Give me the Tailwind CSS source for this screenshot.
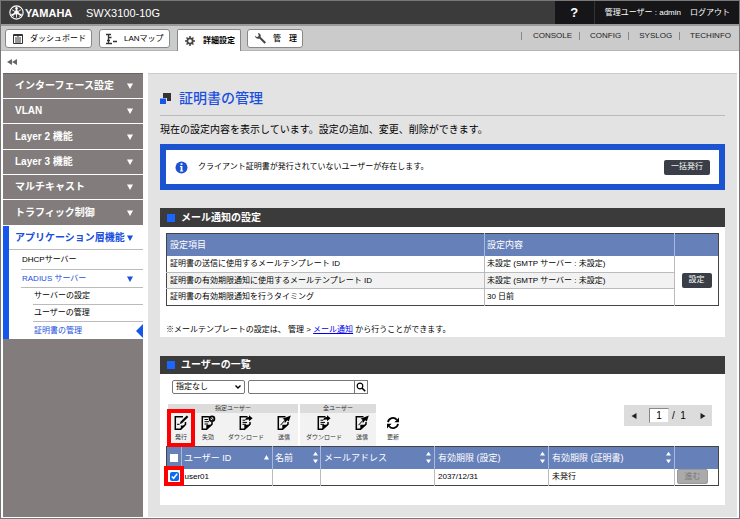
<!DOCTYPE html>
<html lang="ja">
    <head>
        <meta charset="UTF-8" />
        <meta name="viewport" content="width=device-width, initial-scale=1.0" />
        <title>SWX3100-10G</title>
        <script src="https://cdn.jsdelivr.net/npm/@tailwindcss/browser@4"></script>
    </head>
    <body class="flex min-h-screen flex-col border border-[#777] bg-white font-['Liberation_Sans','Noto_Sans_CJK_JP',sans-serif] text-[8px] leading-3 text-black">
        <!-- Icons -->
        <svg class="hidden">
            <symbol id="doc" viewBox="0 0 16 16">
                <path d="M9.5 1.8H2.3v12.4h4.2l5.5-5V7" fill="none" stroke="currentColor" stroke-width="1.5" />
                <path d="M6.3 14.9V9.8h5.9z" fill="currentColor" />
            </symbol>
            <symbol id="issue" viewBox="0 0 16 16">
                <path d="M10 1.8H2.3v12.4h5.2l5-4.7V7" fill="none" stroke="currentColor" stroke-width="1.5" />
                <path d="M7.8 14.9v-4.3h4.6z" fill="currentColor" />
                <path d="M13.8.6l1.5 1.5L9 8.3l-2.2.8.7-2.3z" fill="currentColor" />
                <path d="M4 9.3h2.6" stroke="currentColor" />
            </symbol>
            <symbol id="revoke" viewBox="0 0 16 16">
                <use href="#doc" />
                <path d="M4.5 4.5H8M4.5 6.7H9M4.5 9H8" stroke="currentColor" />
                <circle cx="12" cy="3.8" r="2.4" fill="#f2f2f2" stroke="currentColor" stroke-width="1.8" />
                <path d="M10.8 2.6l2.4 2.4" stroke="currentColor" />
            </symbol>
            <symbol id="download" viewBox="0 0 16 16">
                <use href="#doc" />
                <path d="M4.5 5.2H7M4.5 7.4H9M4.5 9.3H8" stroke="currentColor" />
                <path d="M7 5.5c.5-2.5 2-3.5 4-3.5V.3l3.6 3-3.6 3V4.4c-1.7 0-2.8.2-4 1.1z" fill="currentColor" />
            </symbol>
            <symbol id="send" viewBox="0 0 16 16">
                <use href="#doc" />
                <path d="M14.8.5l-2 6-1.7-1.2-2.3 3-.3-3.6-2-.9z" fill="currentColor" />
                <path d="M4.5 10.2l4.5-5" stroke="currentColor" />
            </symbol>
            <symbol id="refresh" viewBox="0 0 16 16">
                <path d="M3 7.2a5 5 0 0 1 8.8-2.4M13 8.8a5 5 0 0 1-8.8 2.4" fill="none" stroke="currentColor" stroke-width="1.8" />
                <path d="M14 2.4v4.8H9.4zM2 13.6V8.8h4.6z" fill="currentColor" />
            </symbol>
            <symbol id="down" viewBox="0 0 6 6"><path d="M0 .5h6L3 6z" fill="currentColor" /></symbol>
            <symbol id="sort" viewBox="0 0 6 14"><path d="M0 4.5h6L3 0zM0 9.5h6L3 14z" fill="currentColor" /></symbol>
        </svg>

        <header class="flex h-[23px] items-center bg-[#3b3b3b] text-white">
            <div class="flex w-[85px] items-center gap-px pl-2">
                <svg class="size-[15px]" viewBox="0 0 16 16" fill="none" stroke="currentColor">
                    <circle cx="8" cy="8" r="7.1" stroke-width="1.2" />
                    <path d="M8 8V1.8M8 8l5.5 3.2M8 8l-5.5 3.2" stroke-width="1.8" />
                    <path d="M8 8v5.5M8 8L3.2 5M8 8l4.8-3M6.3 3.5h3.4M11.2 12.4l1.9-3M4.8 12.4l-1.9-3" stroke-width=".9" />
                    <circle cx="8" cy="8" r="1.8" fill="currentColor" />
                </svg>
                <span class="text-[11px] font-bold">YAMAHA</span>
            </div>
            <h1 class="text-[11px]">SWX3100-10G</h1>
            <div class="ml-auto flex h-full items-center bg-[#161618]">
                <a href="#" class="flex h-full w-10 items-center justify-center border-r border-[#333] text-[13px] font-bold">?</a>
                <span class="pl-[10px]">管理ユーザー : admin</span>
                <a href="#" class="px-[9px]">ログアウト</a>
            </div>
        </header>

        <nav class="flex h-[27px] items-end border-t-2 border-b border-t-[#999] border-b-[#b5b5b5] bg-[#cbcbcb] pl-1">
            <a href="#" class="mb-[2px] flex h-[19px] w-[87px] items-center gap-[7px] rounded-[3px] border border-[#888] bg-white pl-[7px]">
                <svg class="h-[10px] w-[10px]" viewBox="0 0 10 10" fill="none" stroke="#333"><path d="M.5.5h9v9h-9zM0 1.5h10M2 4h2M6 4h2M2 6h2M6 6h2M2 8h2M6 8h2M5 1v8" /></svg>
                ダッシュボード
            </a>
            <a href="#" class="mb-[2px] ml-[7px] flex h-[19px] w-[71px] items-center gap-[7px] rounded-[3px] border border-[#888] bg-white pl-[6px]">
                <svg class="h-[12px] w-[11px]" viewBox="0 0 11 12" fill="none" stroke="#333"><path d="M0 1.5h5M2.5 1v10M2.5 4.5h3M1 7.5h3M7 8.5h4M0 10.5h6" stroke-width="1.3" /></svg>
                LANマップ
            </a>
            <a href="#" class="z-10 -mb-px ml-[7px] flex h-[22px] w-[64px] items-center gap-[8px] rounded-t-[2px] border border-b-0 border-[#888] bg-white pl-[7px] font-bold">
                <svg class="size-[10px]" viewBox="0 0 10 10" fill="none" stroke="#444"><circle cx="5" cy="5" r="2.7" stroke-width="1.8" /><path d="M5 0v2M5 8v2M0 5h2M8 5h2M1.5 1.5l1.3 1.3M7.2 7.2l1.3 1.3M8.5 1.5L7.2 2.8M2.8 7.2L1.5 8.5" stroke-width="1.5" /></svg>
                詳細設定
            </a>
            <a href="#" class="mb-[2px] ml-[6px] flex h-[19px] w-[56px] items-center gap-[7px] rounded-[3px] border border-[#888] bg-white pl-[7px] font-medium">
                <svg class="size-[11px]" viewBox="0 0 11 11"><path d="M3 0a3 3 0 0 1 2.6 4L11 9.3 9.5 10.8 4.3 5.5A3 3 0 0 1 0 2.8L2 4.2 3.8 3z" fill="#444" /></svg>
                <span>管&emsp;理</span>
            </a>
            <ul class="mb-2 ml-auto flex h-3 items-center text-[#222]">
                <li class="border-l border-[#888] pr-[7px] pl-[11px] leading-[8px]"><a href="#">CONSOLE</a></li>
                <li class="border-l border-[#888] pr-[7px] pl-[10px] leading-[8px]"><a href="#">CONFIG</a></li>
                <li class="border-l border-[#888] pr-[7px] pl-[10px] leading-[8px]"><a href="#">SYSLOG</a></li>
                <li class="border-l border-[#888] pr-[8px] pl-[10px] leading-[8px]"><a href="#">TECHINFO</a></li>
            </ul>
        </nav>

        <button class="flex h-[22px] items-center px-[6px]" aria-label="メニューを閉じる">
            <svg class="h-[6px] w-[10px]" viewBox="0 0 10 6"><path d="M5 0v6L0 3zM10 0v6L5 3z" fill="#666" /></svg>
        </button>

        <div class="flex flex-1 gap-[5px] pb-px pl-[2px]">
            <!-- Menu -->
            <aside class="w-[140px] shrink-0 bg-[#827d7c]">
                <ul class="text-[10px] font-bold text-white">
                    <li><a href="#" class="flex h-[26px] items-center justify-between border-t border-b border-t-[#666] border-b-white pr-[10px] pl-3">インターフェース設定<svg class="size-[6px]"><use href="#down" /></svg></a></li>
                    <li><a href="#" class="flex h-[25px] items-center justify-between border-b border-white pr-[10px] pl-3">VLAN<svg class="size-[6px]"><use href="#down" /></svg></a></li>
                    <li><a href="#" class="flex h-[26px] items-center justify-between border-b border-white pr-[10px] pl-3">Layer 2 機能<svg class="size-[6px]"><use href="#down" /></svg></a></li>
                    <li><a href="#" class="flex h-[25px] items-center justify-between border-b border-white pr-[10px] pl-3">Layer 3 機能<svg class="size-[6px]"><use href="#down" /></svg></a></li>
                    <li><a href="#" class="flex h-[25px] items-center justify-between border-b border-white pr-[10px] pl-3">マルチキャスト<svg class="size-[6px]"><use href="#down" /></svg></a></li>
                    <li><a href="#" class="flex h-[26px] items-center justify-between border-b border-white pr-[10px] pl-3">トラフィック制御<svg class="size-[6px]"><use href="#down" /></svg></a></li>
                </ul>
                <div class="border-l-[6px] border-[#1457ea] bg-white">
                    <a href="#" class="flex h-6 items-center justify-between border-b border-[#bbb] pr-[10px] pl-[6px] text-[10px] font-bold text-[#1b4fe0]">アプリケーション層機能<svg class="size-[6px]"><use href="#down" /></svg></a>
                    <ul class="ml-3">
                        <li><a href="#" class="flex h-5 items-center border-b border-[#bbb] pl-px">DHCPサーバー</a></li>
                        <li><a href="#" class="flex h-[18px] items-center justify-between border-b border-[#bbb] pr-[10px] pl-px text-[#1b4fe0]">RADIUS サーバー<svg class="size-[6px]"><use href="#down" /></svg></a></li>
                    </ul>
                    <ul class="ml-6">
                        <li><a href="#" class="flex h-[17px] items-center border-b border-[#bbb] pl-px">サーバーの設定</a></li>
                        <li><a href="#" class="flex h-[17px] items-center border-b border-[#bbb] pl-px">ユーザーの管理</a></li>
                        <li>
                            <a href="#" class="flex h-[17px] items-center justify-between pl-px text-[#1b4fe0]">
                                証明書の管理
                                <svg class="h-[14px] w-[7px]" viewBox="0 0 7 14"><path d="M7 0v14L0 7z" fill="#1457ea" /></svg>
                            </a>
                        </li>
                    </ul>
                </div>
            </aside>

            <main class="mr-[2px] flex-1 border-t border-[#ccc] bg-[#e3e3e3] px-3 pb-3">
                <h2 class="flex h-[42px] items-center gap-[8px] border-b border-[#bbb] pt-[7px] text-[14px] leading-5 font-medium text-[#1b4fe0]">
                    <svg class="size-[11px]" viewBox="0 0 11 11"><path d="M3 0h8v8H3z" fill="#333" /><path d="M0 5h7v6H0z" fill="#e3e3e3" /><path d="M0 5.5h6V11H0z" fill="#1457ea" /></svg>
                    証明書の管理
                </h2>
                <p class="py-[6px] text-[10px] leading-4">現在の設定内容を表示しています。設定の追加、変更、削除ができます。</p>

                <section class="flex h-[46px] items-center border-[6px] border-[#1b53d0] bg-white pr-[9px] pl-[9px]">
                    <svg class="mr-[10px] size-[13px]" viewBox="0 0 13 13"><circle cx="6.5" cy="6.5" r="6" fill="#1b53d0" /><path d="M5.6 2.2h1.8V4H5.6zM4.9 5h2.5v4.6h.8v1H4.9v-1h.8V6h-.8z" fill="#fff" /></svg>
                    <p>クライアント証明書が発行されていないユーザーが存在します。</p>
                    <button class="ml-auto h-[15px] w-[46px] rounded-[2px] bg-[#3a3e46] text-white">一括発行</button>
                </section>

                <section class="mt-[18px] bg-white pb-px">
                    <h3 class="flex h-[19px] items-center gap-[6px] bg-[#3b3b3b] pl-[7px] text-[10px] font-bold text-white"><span class="size-2 bg-[#1a66ff]"></span>メール通知の設定</h3>
                    <div class="px-[6px] pt-[6px]">
                        <table class="w-full border-collapse border border-[#444] text-left">
                            <thead class="bg-[#6680ba] text-[9px] text-white">
                                <tr class="h-[22px]">
                                    <th class="px-[3px] font-normal">設定項目</th>
                                    <th class="w-[190px] border-x border-[#aab8dc] px-[2px] font-normal">設定内容</th>
                                    <th class="w-[44px]"></th>
                                </tr>
                            </thead>
                            <tbody>
                                <tr class="h-[17px]">
                                    <td class="border-b border-[#bbb] px-[3px]">証明書の送信に使用するメールテンプレート ID</td>
                                    <td class="border-x border-b border-[#bbb] px-[2px]">未設定 (SMTP サーバー : 未設定)</td>
                                    <td rowspan="3" class="text-center"><button class="h-[15px] w-[30px] rounded-[2px] bg-[#3a3e46] text-white">設定</button></td>
                                </tr>
                                <tr class="h-[16px] bg-[#f2f2f2]">
                                    <td class="border-b border-[#bbb] px-[3px]">証明書の有効期限通知に使用するメールテンプレート ID</td>
                                    <td class="border-x border-b border-[#bbb] px-[2px]">未設定 (SMTP サーバー : 未設定)</td>
                                </tr>
                                <tr class="h-[17px]">
                                    <td class="px-[3px]">証明書の有効期限通知を行うタイミング</td>
                                    <td class="border-x border-[#bbb] px-[2px]">30 日前</td>
                                </tr>
                            </tbody>
                        </table>
                        <p class="pt-[18px]">※メールテンプレートの設定は、 管理 &gt; <a href="#" class="text-[#0000ee] underline">メール通知</a> から行うことができます。</p>
                    </div>
                </section>

                <section class="mt-[19px] bg-white pb-[19px]">
                    <h3 class="flex h-[18px] items-center gap-[6px] bg-[#3b3b3b] pl-[7px] text-[10px] font-bold text-white"><span class="size-2 bg-[#1a66ff]"></span>ユーザーの一覧</h3>
                    <div class="px-[6px] pt-[6px]">
                        <form class="flex h-[14px] pl-[6px]">
                            <div class="relative">
                                <select aria-label="検索項目" class="block h-[14px] w-[73px] appearance-none rounded-[2px] border border-[#777] bg-white pl-[3px] leading-3">
                                    <option>指定なし</option>
                                </select>
                                <svg class="pointer-events-none absolute top-[5px] right-[4px] h-[4px] w-[6px]" viewBox="0 0 6 4"><path d="M.5.5L3 3 5.5.5" fill="none" stroke="#000" stroke-width="1.4" /></svg>
                            </div>
                            <input type="text" aria-label="検索" class="ml-[3px] h-[14px] w-[107px] rounded-l-[2px] border border-[#777] px-1" />
                            <button type="button" aria-label="検索" class="-ml-px flex h-[14px] w-[14px] items-center justify-center border border-[#777]">
                                <svg class="size-[10px]" viewBox="0 0 10 10" fill="none" stroke="#000"><circle cx="4" cy="4" r="2.8" stroke-width="1.2" /><path d="M6 6l3.2 3.2" stroke-width="1.6" /></svg>
                            </button>
                        </form>

                        <div class="mt-[10px] flex items-start pr-[7px] text-[6px] leading-[9px] text-[#333]">
                            <div class="ml-[2px] w-[130px] bg-[#f2f2f2]">
                                <p class="bg-[#dcdcdc] text-center">指定ユーザー</p>
                                <div class="flex h-[33px] pt-[2px]">
                                    <button class="relative flex w-[26px] flex-col items-center gap-[2px]">
                                        <svg class="size-4 text-black"><use href="#issue" /></svg>発行
                                        <span class="absolute -top-[6px] -left-px h-[38px] w-[28px] border-4 border-[#f00]"></span>
                                    </button>
                                    <button class="flex w-[28px] flex-col items-center gap-[2px]"><svg class="size-4 text-black"><use href="#revoke" /></svg>失効</button>
                                    <button class="flex w-[48px] flex-col items-center gap-[2px]"><svg class="size-4 text-black"><use href="#download" /></svg>ダウンロード</button>
                                    <button class="flex w-[28px] flex-col items-center gap-[2px]"><svg class="size-4 text-black"><use href="#send" /></svg>送信</button>
                                </div>
                            </div>
                            <div class="ml-[2px] w-[76px] bg-[#f2f2f2]">
                                <p class="bg-[#dcdcdc] text-center">全ユーザー</p>
                                <div class="flex h-[33px] pt-[2px]">
                                    <button class="flex w-[48px] flex-col items-center gap-[2px]"><svg class="size-4 text-black"><use href="#download" /></svg>ダウンロード</button>
                                    <button class="flex w-[28px] flex-col items-center gap-[2px]"><svg class="size-4 text-black"><use href="#send" /></svg>送信</button>
                                </div>
                            </div>
                            <button class="mt-[11px] ml-[9px] flex w-4 flex-col items-center gap-[2px]"><svg class="size-4 text-black"><use href="#refresh" /></svg>更新</button>

                            <div class="mt-[1px] ml-auto flex h-[21px] w-[88px] items-center bg-[#dcdcdc] text-[10px] text-black">
                                <button class="flex w-[25px] justify-center pr-[6px]" aria-label="前へ"><svg class="size-[6px]" viewBox="0 0 6 6"><path d="M5.5 0v6L.5 3z" fill="#222" /></svg></button>
                                <input type="text" value="1" aria-label="ページ" class="h-[15px] w-5 border border-t-[#888] border-r-[#ddd] border-b-[#ddd] border-l-[#888] bg-white text-center" />
                                <span class="flex-1 pl-[3px] leading-3 whitespace-pre">/  1</span>
                                <button class="flex w-[19px] justify-center" aria-label="次へ"><svg class="size-[6px]" viewBox="0 0 6 6"><path d="M.5 0v6l5-3z" fill="#222" /></svg></button>
                            </div>
                        </div>

                        <table class="w-full table-fixed border-collapse border border-[#444] text-left">
                            <thead class="bg-[#6680ba] text-[9px] text-white">
                                <tr class="h-[22px]">
                                    <th class="w-[15px] border-r border-[#aab8dc]"><input type="checkbox" aria-label="すべて選択" class="mx-auto block size-2 appearance-none bg-white" /></th>
                                    <th class="w-[91px] px-[2px] font-normal"><span class="flex items-center justify-between">ユーザー ID<svg class="mr-px size-[5px]" viewBox="0 0 6 6"><path d="M0 5.5h6L3 0z" fill="#fff" /></svg></span></th>
                                    <th class="w-[48px] border-l border-[#aab8dc] px-[2px] font-normal"><span class="flex items-center justify-between">名前<svg class="h-[13px] w-[5px]"><use href="#sort" /></svg></span></th>
                                    <th class="w-[114px] border-l border-[#aab8dc] px-[3px] font-normal"><span class="flex items-center justify-between">メールアドレス<svg class="h-[13px] w-[5px]"><use href="#sort" /></svg></span></th>
                                    <th class="w-[114px] border-l border-[#aab8dc] px-[3px] font-normal"><span class="flex items-center justify-between">有効期限 (設定)<svg class="h-[13px] w-[5px]"><use href="#sort" /></svg></span></th>
                                    <th class="border-l border-[#aab8dc] px-[3px] font-normal"><span class="flex items-center justify-between">有効期限 (証明書)<svg class="h-[13px] w-[5px]"><use href="#sort" /></svg></span></th>
                                    <th class="w-[44px] border-l border-[#aab8dc]"></th>
                                </tr>
                            </thead>
                            <tbody>
                                <tr class="h-[17px]">
                                    <td class="relative">
                                        <input type="checkbox" checked aria-label="user01" class="mx-auto block size-[9px] accent-[#0b6cf0]" />
                                        <span class="pointer-events-none absolute -top-[3px] -left-[3px] size-5 border-4 border-[#f00]"></span>
                                    </td>
                                    <td class="px-[3px]">user01</td>
                                    <td class="border-l border-[#bbb]"></td>
                                    <td class="border-l border-[#bbb]"></td>
                                    <td class="border-l border-[#bbb] px-[3px]">2037/12/31</td>
                                    <td class="border-l border-[#bbb] px-[3px]">未発行</td>
                                    <td class="border-l border-[#bbb] px-[2px]"><button disabled class="block h-[15px] w-[31px] rounded-[2px] border border-[#999] bg-[#aaa] text-center leading-3 text-[#777]">進む</button></td>
                                </tr>
                            </tbody>
                        </table>
                    </div>
                </section>
            </main>
        </div>
    </body>
</html>
